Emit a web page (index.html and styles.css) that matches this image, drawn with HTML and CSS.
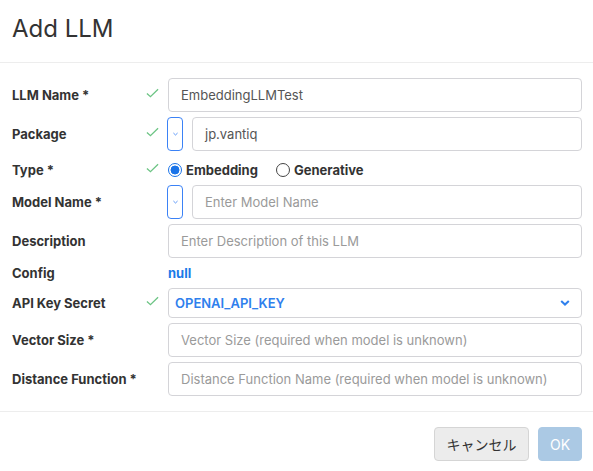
FILE: index.html
```html
<!DOCTYPE html>
<html>
<head>
<meta charset="utf-8">
<link rel="stylesheet" href="styles.css">
</head>
<body>
<div class="dialog">
  <div class="header"><h1 class="title">Add LLM</h1></div>
  <div class="body">
    <div class="row h34">
      <div class="label">LLM Name *</div>
      <div class="check"><svg viewBox="0 0 14 10" width="13" height="10"><path d="M1 5.5 L4.8 9 L13 1" fill="none" stroke="#6cc484" stroke-width="1.4"/></svg></div>
      <div class="control"><div class="input value">EmbeddingLLMTest</div></div>
    </div>
    <div class="row h34">
      <div class="label">Package</div>
      <div class="check"><svg viewBox="0 0 14 10" width="13" height="10"><path d="M1 5.5 L4.8 9 L13 1" fill="none" stroke="#6cc484" stroke-width="1.4"/></svg></div>
      <div class="control">
        <div class="mini"><svg viewBox="0 0 6 4" width="5" height="4"><path d="M0.5 0.8 L3 3.2 L5.5 0.8" fill="none" stroke="#3b82f6" stroke-width="1"/></svg></div>
        <div class="input value wide">jp.vantiq</div>
      </div>
    </div>
    <div class="row h24 typerow">
      <div class="label">Type *</div>
      <div class="check"><svg viewBox="0 0 14 10" width="13" height="10"><path d="M1 5.5 L4.8 9 L13 1" fill="none" stroke="#6cc484" stroke-width="1.4"/></svg></div>
      <div class="control radios">
        <span class="radio on"></span><span class="rlabel">Embedding</span>
        <span class="radio off"></span><span class="rlabel">Generative</span>
      </div>
    </div>
    <div class="row h34">
      <div class="label">Model Name *</div>
      <div class="check"></div>
      <div class="control">
        <div class="mini"><svg viewBox="0 0 6 4" width="5" height="4"><path d="M0.5 0.8 L3 3.2 L5.5 0.8" fill="none" stroke="#3b82f6" stroke-width="1"/></svg></div>
        <div class="input ph wide">Enter Model Name</div>
      </div>
    </div>
    <div class="row h34">
      <div class="label">Description</div>
      <div class="check"></div>
      <div class="control"><div class="input ph">Enter Description of this LLM</div></div>
    </div>
    <div class="row h20">
      <div class="label">Config</div>
      <div class="check"></div>
      <div class="control"><span class="null">null</span></div>
    </div>
    <div class="row h30">
      <div class="label">API Key Secret</div>
      <div class="check"><svg viewBox="0 0 14 10" width="13" height="10"><path d="M1 5.5 L4.8 9 L13 1" fill="none" stroke="#6cc484" stroke-width="1.4"/></svg></div>
      <div class="control">
        <div class="select"><span>OPENAI_API_KEY</span><svg viewBox="0 0 10 6" width="10" height="6"><path d="M1.2 1 L5 4.6 L8.8 1" fill="none" stroke="#2f80ed" stroke-width="2"/></svg></div>
      </div>
    </div>
    <div class="row h34">
      <div class="label">Vector Size *</div>
      <div class="check"></div>
      <div class="control"><div class="input ph">Vector Size (required when model is unknown)</div></div>
    </div>
    <div class="row h34">
      <div class="label">Distance Function *</div>
      <div class="check"></div>
      <div class="control"><div class="input ph">Distance Function Name (required when model is unknown)</div></div>
    </div>
  </div>
  <div class="footer">
    <button class="btn cancel">キャンセル</button>
    <button class="btn ok">OK</button>
  </div>
</div>
</body>
</html>
```

FILE: styles.css
```css
* { box-sizing: border-box; }
html, body { margin: 0; padding: 0; background: #fff; }
body { font-family: Inter, "Noto Sans", "Noto Sans CJK JP", sans-serif; color: #333; }
.dialog { width: 593px; }
.header { height: 63px; border-bottom: 1px solid #ededed; padding: 14px 12px 0; }
.title { margin: 0; font-size: 24px; font-weight: 400; line-height: 30px; color: #333; }
.body { padding: 15px 11px 15px 12px; display: flex; flex-direction: column; gap: 5px; }
.row { display: flex; align-items: center; }
.h34 { height: 34px; }
.h30 { height: 30px; }
.h24 { height: 24px; }
.h20 { height: 20px; }
.typerow { padding-top: 3px; }
.label { width: 133px; font-size: 13px; font-weight: 700; color: #333; }
.check { width: 23px; display: flex; align-items: center; padding-left: 1px; margin-top: -4px; }
.control { flex: 1; display: flex; align-items: center; height: 100%; }
.input { flex: 1; height: 100%; border: 1px solid #d4d4d8; border-radius: 4px; display: flex; align-items: center; padding: 0 12px; font-size: 13px; }
.value { color: #555; }
.ph { color: #9a9a9a; }
.mini { width: 16px; height: 100%; border: 1.5px solid #3b82f6; border-radius: 4px; display: flex; align-items: center; justify-content: center; margin-right: 9px; margin-left: -1px; }
.radios { gap: 0; }
.radio { width: 14px; height: 14px; border-radius: 50%; display: inline-block; }
.radio.on { border: 1.5px solid #1a73e8; background: radial-gradient(circle, #1a73e8 0 4.2px, #fff 4.7px); }
.radio.off { border: 1.2px solid #444; margin-left: 18px; }
.rlabel { font-size: 13px; font-weight: 700; color: #333; margin-left: 4px; }
.null { font-size: 13px; font-weight: 700; color: #1a7ae8; }
.select { flex: 1; height: 100%; border: 1px solid #d4d4d8; border-radius: 4px; display: flex; align-items: center; justify-content: space-between; padding: 0 11px 0 6px; font-size: 13px; font-weight: 600; color: #2f80ed; }
.footer { border-top: 1px solid #ededed; padding: 15px 11px 0; display: flex; justify-content: flex-end; gap: 9px; }
.btn { height: 34px; border-radius: 4px; font-size: 14px; padding: 0; font-family: Inter, "Noto Sans CJK JP", sans-serif; }
.cancel { width: 95px; background: #ececec; border: 1px solid #d5d5d5; color: #333; font-family: "Noto Sans CJK JP", sans-serif; }
.ok { width: 44px; background: #abc9e4; border: 1px solid #abc9e4; color: #fff; }
```
